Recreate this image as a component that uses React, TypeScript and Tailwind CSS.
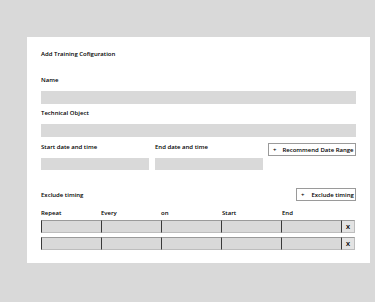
import React from "react";

function Cell() {
  return (
    <div className="h-[13px] w-[60px] bg-[#d9d9d9] border-l border-l-[#3a3a3a] border-t border-t-[#9a9a9a] border-b border-b-[#bdbdbd]" />
  );
}

function Row() {
  return (
    <div className="flex">
      <Cell />
      <Cell />
      <Cell />
      <Cell />
      <Cell />
      <div className="h-[13px] w-[14px] flex items-center justify-center bg-[#e3e3e3] border-l border-l-[#3a3a3a] border-t border-t-[#9a9a9a] border-b border-b-[#bdbdbd] border-r border-r-[#bdbdbd] text-[6px] font-bold leading-none">
        X
      </div>
    </div>
  );
}

export default function App() {
  return (
    <div
      className="w-[375px] h-[302px] bg-[#d9d9d9] pt-[37px] pl-[27px] text-black"
      style={{ fontFamily: '"Open Sans", "Noto Sans", sans-serif' }}
    >
      <div className="w-[343px] h-[226px] bg-white px-[14px] pt-[13px] flex flex-col text-[6px] font-semibold leading-[8px]">
        <div className="h-[8px]">Add Training Cofiguration</div>

        <div className="mt-[18px] h-[8px]">Name</div>
        <div className="mt-[7px] h-[13px] bg-[#d9d9d9]" />

        <div className="mt-[5px] h-[8px]">Technical Object</div>
        <div className="mt-[7px] h-[13px] bg-[#d9d9d9]" />

        <div className="mt-[6px] flex">
          <div className="w-[108px] flex flex-col">
            <div className="h-[8px]">Start date and time</div>
            <div className="mt-[7px] h-[12px] bg-[#d9d9d9]" />
          </div>
          <div className="ml-[6px] w-[108px] flex flex-col">
            <div className="h-[8px]">End date and time</div>
            <div className="mt-[7px] h-[12px] bg-[#d9d9d9]" />
          </div>
          <div className="ml-auto h-[13px] w-[88px] border border-[#9a9a9a] flex items-center pl-[4px] gap-[6px] whitespace-nowrap">
            <span>+</span>
            <span>Recommend Date Range</span>
          </div>
        </div>

        <div className="mt-[18px] flex items-center h-[13px]">
          <div>Exclude timing</div>
          <div className="ml-auto h-[13px] w-[60px] border border-[#9a9a9a] flex items-center pl-[4px] gap-[7px] whitespace-nowrap">
            <span>+</span>
            <span>Exclude timing</span>
          </div>
        </div>

        <div className="mt-[8px] flex h-[8px]">
          <div className="w-[60px]">Repeat</div>
          <div className="w-[60px]">Every</div>
          <div className="w-[61px]">on</div>
          <div className="w-[60px]">Start</div>
          <div className="w-[60px]">End</div>
        </div>

        <div className="mt-[3px] flex flex-col gap-[4px]">
          <Row />
          <Row />
        </div>
      </div>
    </div>
  );
}
